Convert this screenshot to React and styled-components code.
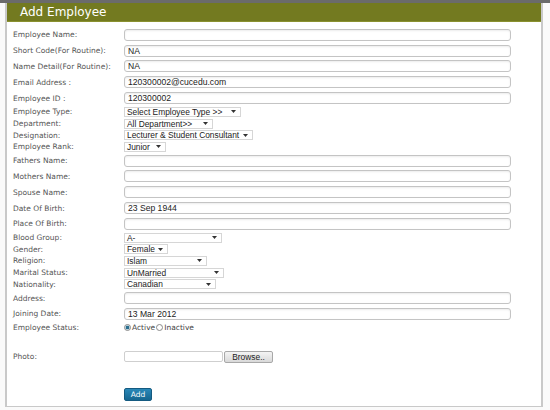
import React from 'react'
import styled, { createGlobalStyle } from 'styled-components'

const GlobalStyle = createGlobalStyle`
  html, body {
    margin: 0;
    padding: 0;
    background: #ffffff;
  }
  body {
    width: 550px;
    height: 410px;
    overflow: hidden;
  }
`

const Page = styled.div`
  width: 550px;
  height: 410px;
  box-sizing: border-box;
  border-top: 3px solid #6b6b6b;
  padding: 0 7px 3px 5px;
  background: #fafafa;
`

const Panel = styled.div`
  height: 404px;
  box-sizing: border-box;
  background: #ffffff;
  border-left: 2px solid #c9c9c9;
  border-right: 2px solid #c9c9c9;
  border-bottom: 1px solid #c9c9c9;
  display: flex;
  flex-direction: column;
`

const Header = styled.div`
  height: 18px;
  background: #737a20;
  border-bottom: 1px solid #8a9130;
  color: #ffffff;
  font-family: "DejaVu Sans", Verdana, sans-serif;
  font-size: 12px;
  line-height: 18px;
  padding-left: 13px;
`

const Body = styled.div`
  padding: 5px 0 0 6px;
  display: flex;
  flex-direction: column;
`

const Row = styled.div`
  display: flex;
  align-items: center;
  height: ${p => p.$h}px;
  margin-top: ${p => p.$mt || 0}px;
`

const Label = styled.div`
  width: 111px;
  flex: none;
  font-family: "DejaVu Sans", Verdana, sans-serif;
  font-size: 7.5px;
  color: #555555;
  white-space: nowrap;
`

const TextBox = styled.div`
  width: 387px;
  height: 12px;
  box-sizing: border-box;
  border: 1px solid #c4c4c4;
  border-radius: 3px;
  box-shadow: inset 0 1px 2px rgba(0, 0, 0, 0.08);
  font-family: "Liberation Sans", Arial, sans-serif;
  font-size: 8.6px;
  line-height: 10px;
  color: #222222;
  padding-left: 3px;
`

const SelectBox = styled.div`
  width: ${p => p.$w}px;
  height: 10px;
  box-sizing: border-box;
  border: 1px solid #d6d6d6;
  background: #ffffff;
  display: flex;
  align-items: center;
  justify-content: space-between;
  padding: 0 4px 0 2px;
  font-family: "Liberation Sans", Arial, sans-serif;
  font-size: 8.4px;
  color: #222222;
  white-space: nowrap;
`

const Caret = () => (
  <svg width="5" height="3" viewBox="0 0 5 3">
    <path d="M0 0 L5 0 L2.5 3 Z" fill="#333" />
  </svg>
)

const Radios = styled.div`
  display: flex;
  align-items: center;
  font-family: "DejaVu Sans", Verdana, sans-serif;
  font-size: 7.5px;
  color: #444444;
`

const Dot = styled.span`
  width: 5px;
  height: 5px;
  border-radius: 50%;
  border: 1px solid #8a8a8a;
  background: ${p => (p.$on ? 'radial-gradient(circle, #2b6f8f 40%, #cfe3ec 60%)' : '#ffffff')};
  display: inline-block;
  margin: 0 1px 0 ${p => (p.$on ? 0 : 1)}px;
`

const FileField = styled.div`
  display: flex;
  align-items: center;
`

const FileText = styled.div`
  width: 99px;
  height: 11px;
  box-sizing: border-box;
  border: 1px solid #cfcfcf;
  border-radius: 2px;
`

const BrowseButton = styled.div`
  width: 49px;
  height: 12px;
  box-sizing: border-box;
  margin-left: 1px;
  border: 1px solid #a8a8a8;
  border-radius: 2px;
  background: linear-gradient(#f4f4f4, #d9d9d9);
  font-family: "Liberation Sans", Arial, sans-serif;
  font-size: 8.4px;
  line-height: 10px;
  color: #222222;
  text-align: center;
`

const AddButton = styled.div`
  width: 28px;
  height: 13px;
  margin-left: 111px;
  margin-top: 23px;
  border-radius: 2px;
  background: linear-gradient(#2a88b8, #166690);
  border: 1px solid #145a80;
  box-sizing: border-box;
  color: #ffffff;
  font-family: "DejaVu Sans", Verdana, sans-serif;
  font-size: 7.5px;
  line-height: 11px;
  text-align: center;
`

const fields = [
  { label: 'Employee Name:', type: 'text', value: '' },
  { label: 'Short Code(For Routine):', type: 'text', value: 'NA' },
  { label: 'Name Detail(For Routine):', type: 'text', value: 'NA' },
  { label: 'Email Address :', type: 'text', value: '120300002@cucedu.com' },
  { label: 'Employee ID :', type: 'text', value: '120300002' },
  { label: 'Employee Type:', type: 'select', value: 'Select Employee Type >>', w: 117 },
  { label: 'Department:', type: 'select', value: 'All Department>>', w: 89 },
  { label: 'Designation:', type: 'select', value: 'Lecturer & Student Consultant', w: 129 },
  { label: 'Employee Rank:', type: 'select', value: 'Junior', w: 42 },
  { label: 'Fathers Name:', type: 'text', value: '' },
  { label: 'Mothers Name:', type: 'text', value: '' },
  { label: 'Spouse Name:', type: 'text', value: '' },
  { label: 'Date Of Birth:', type: 'text', value: '23 Sep 1944' },
  { label: 'Place Of Birth:', type: 'text', value: '' },
  { label: 'Blood Group:', type: 'select', value: 'A-', w: 98 },
  { label: 'Gender:', type: 'select', value: 'Female', w: 44 },
  { label: 'Religion:', type: 'select', value: 'Islam', w: 83 },
  { label: 'Marital Status:', type: 'select', value: 'UnMarried', w: 100 },
  { label: 'Nationality:', type: 'select', value: 'Canadian', w: 92 },
  { label: 'Address:', type: 'text', value: '' },
  { label: 'Joining Date:', type: 'text', value: '13 Mar 2012' },
]

export default function App() {
  return (
    <>
      <GlobalStyle />
      <Page>
        <Panel>
          <Header>Add Employee</Header>
          <Body>
            {fields.map(f =>
              f.type === 'text' ? (
                <Row key={f.label} $h={15.8}>
                  <Label>{f.label}</Label>
                  <TextBox>{f.value}</TextBox>
                </Row>
              ) : (
                <Row key={f.label} $h={11.7}>
                  <Label>{f.label}</Label>
                  <SelectBox $w={f.w}>
                    <span>{f.value}</span>
                    <Caret />
                  </SelectBox>
                </Row>
              )
            )}
            <Row $h={12}>
              <Label>Employee Status:</Label>
              <Radios>
                <Dot $on />Active<Dot />Inactive
              </Radios>
            </Row>
            <Row $h={16} $mt={15}>
              <Label>Photo:</Label>
              <FileField>
                <FileText />
                <BrowseButton>Browse..</BrowseButton>
              </FileField>
            </Row>
            <AddButton>Add</AddButton>
          </Body>
        </Panel>
      </Page>
    </>
  )
}
